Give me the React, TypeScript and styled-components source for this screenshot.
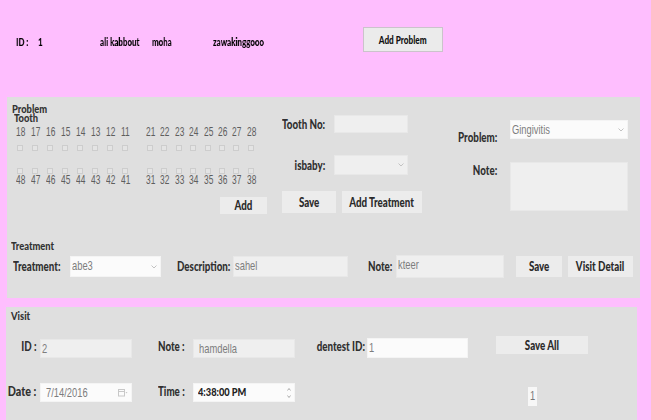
import React from "react";
import styled, { createGlobalStyle } from "styled-components";

const BOLD = `Lato, "Open Sans", "Liberation Sans", sans-serif`;
const PLAIN = `"Liberation Sans", Arial, sans-serif`;

const Global = createGlobalStyle`
  html, body { margin: 0; padding: 0; background: #FEBEFE; }
  body { width: 651px; height: 420px; overflow: hidden; font-family: ${PLAIN}; }
`;

/* condensed text: the original UI is drawn with a narrow face */
const Sq = styled.span<{ $o?: string; $s?: number }>`
  display: inline-block;
  white-space: nowrap;
  transform: scaleX(${(p) => p.$s ?? 0.78});
  transform-origin: ${(p) => p.$o ?? "left"} center;
`;

const Page = styled.div`
  width: 651px;
  height: 420px;
  background: #febefe;
  display: flex;
  flex-direction: column;
  overflow: hidden;
`;

/* ---------- header ---------- */
const Header = styled.div`
  height: 97px;
  box-sizing: border-box;
  padding: 27px 0 0 16px;
  display: flex;
  align-items: flex-start;
  flex-shrink: 0;
`;

const HeaderText = styled.div<{ $w: number }>`
  width: ${(p) => p.$w}px;
  flex-shrink: 0;
  margin-top: 8px;
  font-family: ${BOLD};
  font-size: 12px;
  line-height: 14px;
  font-weight: 900;
  color: #000;
  white-space: nowrap;
  & > span {
    will-change: transform;
  }
`;

const HeaderButton = styled.div`
  width: 80px;
  height: 25px;
  box-sizing: border-box;
  border: 1px solid #cbc3cb;
  background: #ebebeb;
  display: flex;
  align-items: center;
  justify-content: center;
  font-family: ${BOLD};
  font-size: 10.5px;
  font-weight: 900;
  color: #111;
`;

/* ---------- panels ---------- */
const MainPanel = styled.div`
  margin-left: 7px;
  width: 633px;
  background: #dfdfdf;
  display: flex;
  flex-direction: column;
  flex-shrink: 0;
`;

const VisitPanel = styled.div`
  margin: 9px 0 0 6px;
  width: 631px;
  flex: 1;
  background: #dfdfdf;
  box-sizing: border-box;
  padding: 3px 0 0 0;
`;

const ProblemSection = styled.div`
  height: 135px;
  display: flex;
`;

const TreatmentSection = styled.div`
  height: 66px;
  box-sizing: border-box;
  padding-top: 8px;
`;

const Title = styled.div<{ $indent?: number }>`
  font-family: ${BOLD};
  font-size: 11px;
  line-height: 12px;
  font-weight: 900;
  color: #333;
  padding-left: ${(p) => p.$indent ?? 0}px;
`;

const TitleStack = styled.div`
  font-family: ${BOLD};
  font-size: 11px;
  line-height: 9px;
  font-weight: 900;
  color: #333;
`;

const SubTitle = styled.div`
  padding-left: 2px;
`;

const Label = styled.div<{ $w?: number; $align?: string; $pt?: number; $pl?: number; $pr?: number }>`
  ${(p) => (p.$w ? `width: ${p.$w}px;` : "")}
  flex-shrink: 0;
  box-sizing: border-box;
  display: flex;
  justify-content: ${(p) => (p.$align === "right" ? "flex-end" : "flex-start")};
  align-items: flex-start;
  padding-top: ${(p) => p.$pt ?? 0}px;
  padding-left: ${(p) => p.$pl ?? 0}px;
  padding-right: ${(p) => p.$pr ?? 0}px;
  font-family: ${BOLD};
  font-size: 12.5px;
  line-height: 15px;
  font-weight: 900;
  color: #303030;
  white-space: nowrap;
`;

const Field = styled.div<{ $w: number; $h: number; $white?: boolean; $bold?: boolean }>`
  position: relative;
  width: ${(p) => p.$w}px;
  height: ${(p) => p.$h}px;
  flex-shrink: 0;
  box-sizing: border-box;
  background: ${(p) => (p.$white ? "#fbfbfb" : "#efefef")};
  border: 1px solid ${(p) => (p.$white ? "#f4f4f4" : "#e8e8e8")};
  padding: 1px 1px;
  font-family: ${(p) => (p.$bold ? BOLD : PLAIN)};
  font-size: ${(p) => (p.$bold ? "10.5px" : "13px")};
  font-weight: ${(p) => (p.$bold ? 900 : 400)};
  color: ${(p) => (p.$bold ? "#222" : "#7d7d7d")};
  line-height: 15px;
  white-space: nowrap;
  overflow: hidden;
`;

const FieldAdornment = styled.span`
  position: absolute;
  right: 3px;
  top: 50%;
  transform: translateY(-50%);
  display: flex;
  align-items: center;
`;

const Button = styled.div<{ $w: number; $h: number }>`
  width: ${(p) => p.$w}px;
  height: ${(p) => p.$h}px;
  flex-shrink: 0;
  background: #ececec;
  display: flex;
  align-items: center;
  justify-content: center;
  font-family: ${BOLD};
  font-size: 12.5px;
  font-weight: 900;
  color: #2a2a2a;
  white-space: nowrap;
`;

/* ---------- problem: teeth ---------- */
const LeftCol = styled.div`
  width: 263px;
  box-sizing: border-box;
  padding: 7px 3px 0 5px;
  display: flex;
  flex-direction: column;
`;

const TeethGrid = styled.div`
  display: flex;
  margin: 4px 0 0 4px;
`;

const TeethGroup = styled.div<{ $ml?: number }>`
  display: flex;
  margin-left: ${(p) => p.$ml ?? 0}px;
`;

const ToothCol = styled.div<{ $w: number }>`
  width: ${(p) => p.$w}px;
  display: flex;
  flex-direction: column;
  align-items: flex-start;
`;

const Num = styled.div`
  font-family: ${PLAIN};
  font-size: 13.5px;
  line-height: 11px;
  color: #5e5e5e;
  white-space: nowrap;
`;

const Check = styled.div<{ $mt: number }>`
  width: 6px;
  height: 6px;
  margin: ${(p) => p.$mt}px 0 0 1px;
  box-sizing: border-box;
  border: 1px solid #cdcdcd;
  background: #e4e4e4;
`;

const AddRow = styled.div`
  display: flex;
  justify-content: flex-end;
  margin-top: 12px;
`;

/* ---------- problem: middle & right ---------- */
const MidCol = styled.div`
  width: 175px;
  flex-shrink: 0;
  padding-top: 18px;
  display: flex;
  flex-direction: column;
`;

const RightCol = styled.div`
  flex: 1;
  padding-top: 23px;
  display: flex;
  flex-direction: column;
`;

const FormRow = styled.div<{ $mt?: number; $gap: number; $ml?: number; $align?: string }>`
  display: flex;
  align-items: ${(p) => p.$align ?? "center"};
  gap: ${(p) => p.$gap}px;
  margin-top: ${(p) => p.$mt ?? 0}px;
  margin-left: ${(p) => p.$ml ?? 0}px;
`;

/* ---------- treatment ---------- */
const TreatRow = styled.div`
  display: flex;
  align-items: center;
  margin-top: 3px;
  padding-left: 6px;
  height: 23px;
`;

const Spacer = styled.div<{ $w: number }>`
  width: ${(p) => p.$w}px;
  flex-shrink: 0;
`;

/* ---------- visit ---------- */
const VisitGrid = styled.div`
  display: grid;
  grid-template-columns: 34px 92px 61px 102px 72px 101px 28px 92px;
  grid-template-rows: 22px 23px;
  row-gap: 25px;
  margin-top: 14px;
`;

const Cell = styled.div<{ $self?: string; $ml?: number }>`
  display: flex;
  align-self: ${(p) => p.$self ?? "center"};
  margin-left: ${(p) => p.$ml ?? 0}px;
`;

const NumBox = styled.div`
  width: 9px;
  height: 19px;
  background: #f7f7f7;
  font-family: ${PLAIN};
  font-size: 13px;
  line-height: 18px;
  color: #777;
  display: flex;
  justify-content: center;
`;

/* ---------- tiny drawings ---------- */
const Chevron = () => (
  <svg width="6" height="4" viewBox="0 0 6 4">
    <path d="M0.5 0.5 L3 3 L5.5 0.5" fill="none" stroke="#c2c2c2" strokeWidth="1" />
  </svg>
);

const CalendarIcon = () => (
  <svg width="10" height="8" viewBox="0 0 10 8">
    <rect x="0.5" y="0.5" width="6" height="6.5" fill="none" stroke="#c8c8c8" strokeWidth="1" />
    <line x1="0.5" y1="2.5" x2="6.5" y2="2.5" stroke="#c8c8c8" />
    <path d="M7.5 3 L9.5 3 L8.5 4.5 Z" fill="#c8c8c8" />
  </svg>
);

const Spinner = () => (
  <svg width="4" height="12" viewBox="0 0 4 12">
    <path d="M0.5 3.5 L2 1.5 L3.5 3.5" fill="none" stroke="#9a9a9a" strokeWidth="0.8" />
    <path d="M0.5 8.5 L2 10.5 L3.5 8.5" fill="none" stroke="#9a9a9a" strokeWidth="0.8" />
  </svg>
);

const upper1 = [18, 17, 16, 15, 14, 13, 12, 11];
const upper2 = [21, 22, 23, 24, 25, 26, 27, 28];
const lower1 = [48, 47, 46, 45, 44, 43, 42, 41];
const lower2 = [31, 32, 33, 34, 35, 36, 37, 38];

function Teeth({ top, bottom, w }: { top: number[]; bottom: number[]; w: number }) {
  return (
    <>
      {top.map((t, i) => (
        <ToothCol key={t} $w={w}>
          <Num><Sq $s={0.62}>{t}</Sq></Num>
          <Check $mt={8} />
          <Check $mt={17} />
          <Num><Sq $s={0.62}>{bottom[i]}</Sq></Num>
        </ToothCol>
      ))}
    </>
  );
}

const FIELD_S = 0.72;
const HEAD_S = 0.66;

export default function App() {
  return (
    <Page>
      <Global />
      <Header>
        <HeaderText $w={22}><Sq $s={HEAD_S}>ID :</Sq></HeaderText>
        <HeaderText $w={62}><Sq $s={HEAD_S}>1</Sq></HeaderText>
        <HeaderText $w={52}><Sq $s={HEAD_S}>ali kabbout</Sq></HeaderText>
        <HeaderText $w={61}><Sq $s={HEAD_S}>moha</Sq></HeaderText>
        <HeaderText $w={150}><Sq $s={HEAD_S}>zawakinggooo</Sq></HeaderText>
        <HeaderButton><Sq $o="center">Add Problem</Sq></HeaderButton>
      </Header>

      <MainPanel>
        <ProblemSection>
          <LeftCol>
            <TitleStack>
              <div><Sq $s={0.85}>Problem</Sq></div>
              <SubTitle><Sq $s={0.85}>Tooth</Sq></SubTitle>
            </TitleStack>
            <TeethGrid>
              <TeethGroup>
                <Teeth top={upper1} bottom={lower1} w={15} />
              </TeethGroup>
              <TeethGroup $ml={10}>
                <Teeth top={upper2} bottom={lower2} w={14.4} />
              </TeethGroup>
            </TeethGrid>
            <AddRow>
              <Button $w={47} $h={17}><Sq $o="center">Add</Sq></Button>
            </AddRow>
          </LeftCol>

          <MidCol>
            <FormRow $gap={9}>
              <Label $w={55} $align="right"><Sq $o="right">Tooth No:</Sq></Label>
              <Field $w={74} $h={18} />
            </FormRow>
            <FormRow $gap={9} $mt={22}>
              <Label $w={55} $align="right"><Sq $o="right">isbaby:</Sq></Label>
              <Field $w={74} $h={20}>
                <FieldAdornment><Chevron /></FieldAdornment>
              </Field>
            </FormRow>
            <FormRow $gap={6} $mt={16} $ml={12}>
              <Button $w={54} $h={22}><Sq $o="center">Save</Sq></Button>
              <Button $w={80} $h={22}><Sq $o="center">Add Treatment</Sq></Button>
            </FormRow>
          </MidCol>

          <RightCol>
            <FormRow $gap={13} $align="flex-start">
              <Label $w={52} $align="right" $pt={10}><Sq $o="right">Problem:</Sq></Label>
              <Field $w={118} $h={19} $white>
                <Sq $s={FIELD_S}>Gingivitis</Sq>
                <FieldAdornment><Chevron /></FieldAdornment>
              </Field>
            </FormRow>
            <FormRow $gap={13} $mt={17} $align="flex-start">
              <Label $w={52} $align="right" $pt={1}><Sq $o="right">Note:</Sq></Label>
              <Field $w={118} $h={49} />
            </FormRow>
          </RightCol>
        </ProblemSection>

        <TreatmentSection>
          <Title $indent={4}><Sq $s={0.85}>Treatment</Sq></Title>
          <TreatRow>
            <Label $w={57}><Sq>Treatment:</Sq></Label>
            <Field $w={91} $h={21} $white>
              <Sq $s={FIELD_S}>abe3</Sq>
              <FieldAdornment><Chevron /></FieldAdornment>
            </Field>
            <Spacer $w={16} />
            <Label $w={56}><Sq>Description:</Sq></Label>
            <Field $w={115} $h={21}><Sq $s={FIELD_S}>sahel</Sq></Field>
            <Spacer $w={20} />
            <Label $w={28}><Sq>Note:</Sq></Label>
            <Field $w={108} $h={23}><Sq $s={FIELD_S}>kteer</Sq></Field>
            <Spacer $w={12} />
            <Button $w={46} $h={21}><Sq $o="center">Save</Sq></Button>
            <Spacer $w={6} />
            <Button $w={65} $h={21}><Sq $o="center">Visit Detail</Sq></Button>
          </TreatRow>
        </TreatmentSection>
      </MainPanel>

      <VisitPanel>
        <Title $indent={5}><Sq $s={0.85}>Visit</Sq></Title>
        <VisitGrid>
          <Label $align="right" $pr={3} $pt={3}><Sq $o="right">ID :</Sq></Label>
          <Cell $self="end"><Field $w={92} $h={19}><Sq $s={FIELD_S}>2</Sq></Field></Cell>
          <Label $pl={26} $pt={3}><Sq>Note :</Sq></Label>
          <Cell $self="end"><Field $w={102} $h={19}>&nbsp;<Sq $s={FIELD_S}>hamdella</Sq></Field></Cell>
          <Label $align="right" $pr={2} $pt={3}><Sq $o="right">dentest ID:</Sq></Label>
          <Cell $self="end"><Field $w={101} $h={20} $white><Sq $s={FIELD_S}>1</Sq></Field></Cell>
          <div />
          <Cell $self="start"><Button $w={92} $h={18}><Sq $o="center">Save All</Sq></Button></Cell>

          <Label $align="right" $pr={4} $pt={1}><Sq $o="right" $s={0.86}>Date :</Sq></Label>
          <Cell $self="start">
            <Field $w={92} $h={19} $white>
              &nbsp;<Sq $s={FIELD_S}>7/14/2016</Sq>
              <FieldAdornment><CalendarIcon /></FieldAdornment>
            </Field>
          </Cell>
          <Label $pl={26} $pt={1}><Sq>Time :</Sq></Label>
          <Cell $self="start">
            <Field $w={102} $h={19} $white $bold>
              &nbsp;<Sq $s={0.88}>4:38:00 PM</Sq>
              <FieldAdornment><Spinner /></FieldAdornment>
            </Field>
          </Cell>
          <div />
          <div />
          <div />
          <Cell $self="end" $ml={32}><NumBox><Sq $o="center" $s={FIELD_S}>1</Sq></NumBox></Cell>
        </VisitGrid>
      </VisitPanel>
    </Page>
  );
}
